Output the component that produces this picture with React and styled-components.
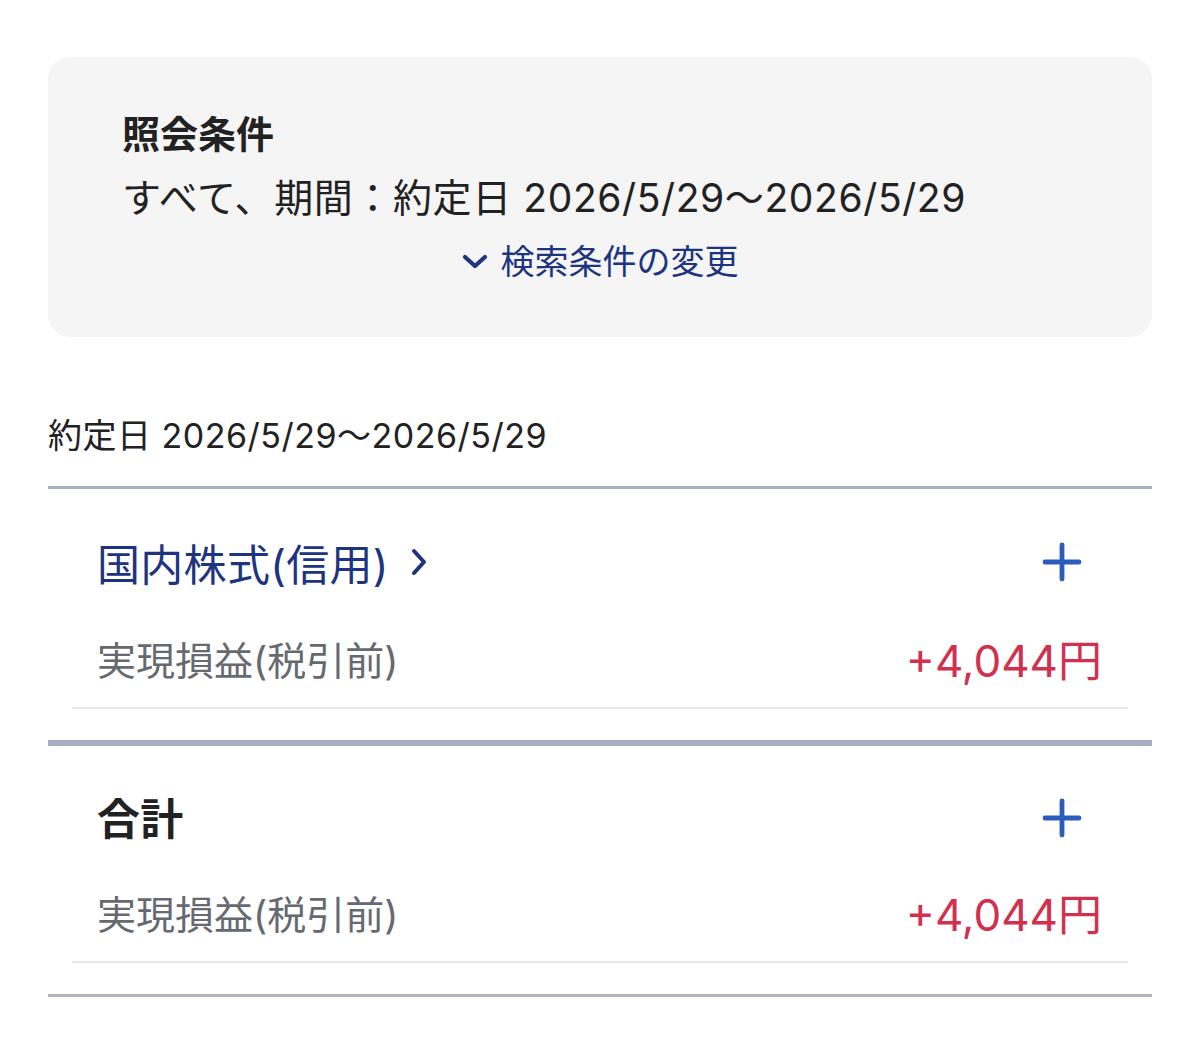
import React from 'react';
import styled, { createGlobalStyle } from 'styled-components';

const GlobalStyle = createGlobalStyle`
  html, body {
    margin: 0;
    padding: 0;
    background: #ffffff;
  }
  body {
    font-family: Inter, "Noto Sans CJK JP", sans-serif;
    color: #222222;
    -webkit-font-smoothing: antialiased;
  }
`;

const Page = styled.div`
  padding: 57px 48px 40px;
`;

// --- 照会条件カード ---
const ConditionCard = styled.div`
  background: #f5f5f5;
  border-radius: 22px;
  padding: 51px 74px 53px;
`;

const CardTitle = styled.div`
  font-size: 38px;
  font-weight: 700;
  line-height: 52px;
  color: #222;
`;

const CardDetail = styled.div`
  margin-top: 12px;
  font-size: 39px;
  line-height: 52px;
  letter-spacing: 0.6px;
  color: #222;
`;

const ChangeLink = styled.a`
  margin-top: 16px;
  display: flex;
  align-items: center;
  justify-content: center;
  gap: 13px;
  font-size: 34px;
  line-height: 44px;
  color: #1d347f;
  text-decoration: none;
  cursor: pointer;
`;

const PeriodLabel = styled.div`
  margin-top: 77px;
  margin-bottom: 28px;
  font-size: 34px;
  line-height: 44px;
  letter-spacing: 0.5px;
  color: #222;
`;

// --- 集計セクション ---
const Section = styled.section`
  border-top: 3px solid #a8afc2;
  border-bottom: 3px solid #a8afc2;
  padding: ${p => (p.$compact ? '39px' : '42px')} 24px 31px;
  & + & {
    border-bottom-color: #b1b4be;
  }
`;

const TitleRow = styled.div`
  display: flex;
  align-items: center;
  justify-content: space-between;
  height: 62px;
  padding: 0 46px 0 25px;
`;

const Title = styled.div`
  display: flex;
  align-items: center;
  gap: 22px;
  font-size: 43px;
  letter-spacing: 0.3px;
  font-weight: ${p => (p.$link ? 400 : 700)};
  color: ${p => (p.$link ? '#1d347f' : '#222')};
`;

const ValueRow = styled.div`
  margin-top: 35px;
  display: flex;
  align-items: center;
  justify-content: space-between;
  height: 60px;
  padding: 0 26px 19px 25px;
  border-bottom: 2px solid #e5e7ec;
`;

const ValueLabel = styled.div`
  font-size: 39px;
  color: #666a70;
`;

const Amount = styled.div`
  font-size: 44px;
  color: ${p => (p.$positive ? '#d1304f' : '#222')};
`;

const IconButton = styled.button`
  border: none;
  background: none;
  padding: 0;
  display: flex;
  cursor: pointer;
  margin-top: ${p => (p.$shift ? '0' : '4px')};
`;

const ChevronDown = () => (
  <svg width="26" height="16" viewBox="0 0 26 16" fill="none">
    <path d="M3 3 L13 12 L23 3" stroke="#1d347f" strokeWidth="4.2" strokeLinecap="round" strokeLinejoin="round" />
  </svg>
);

const ChevronRight = () => (
  <svg width="16" height="28" viewBox="0 0 16 28" fill="none">
    <path d="M3 3 L13 14 L3 25" stroke="#1d347f" strokeWidth="4" strokeLinecap="round" strokeLinejoin="round" />
  </svg>
);

const PlusIcon = () => (
  <svg width="40" height="40" viewBox="0 0 40 40" fill="none">
    <path d="M20 3 V37 M3 20 H37" stroke="#2a5bbd" strokeWidth="4.8" strokeLinecap="round" />
  </svg>
);

const sections = [
  { key: 'margin', title: '国内株式(信用)', link: true, label: '実現損益(税引前)', amount: '+4,044円' },
  { key: 'total', title: '合計', link: false, label: '実現損益(税引前)', amount: '+4,044円' },
];

export default function App() {
  return (
    <>
      <GlobalStyle />
      <Page>
        <ConditionCard>
          <CardTitle>照会条件</CardTitle>
          <CardDetail>すべて、期間：約定日 2026/5/29〜2026/5/29</CardDetail>
          <ChangeLink>
            <ChevronDown />
            検索条件の変更
          </ChangeLink>
        </ConditionCard>

        <PeriodLabel>約定日 2026/5/29〜2026/5/29</PeriodLabel>

        {sections.map(s => (
          <Section key={s.key} $compact={!s.link}>
            <TitleRow>
              <Title $link={s.link}>
                {s.title}
                {s.link && <ChevronRight />}
              </Title>
              <IconButton aria-label="開く" $shift={s.link}>
                <PlusIcon />
              </IconButton>
            </TitleRow>
            <ValueRow>
              <ValueLabel>{s.label}</ValueLabel>
              <Amount $positive>{s.amount}</Amount>
            </ValueRow>
          </Section>
        ))}
      </Page>
    </>
  );
}
